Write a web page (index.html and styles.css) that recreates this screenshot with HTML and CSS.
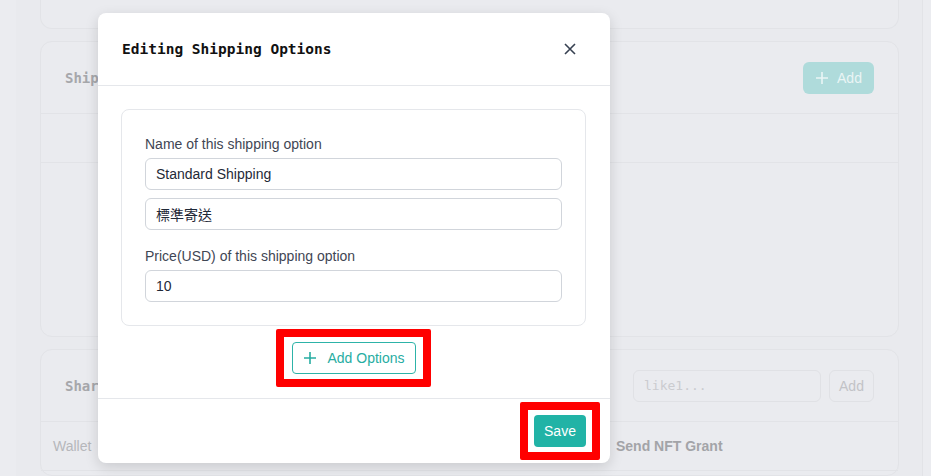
FILE: index.html
```html
<!DOCTYPE html>
<html>
<head>
<meta charset="utf-8">
<link rel="stylesheet" href="styles.css">
</head>
<body>
<div class="page">
  <div class="container">
    <div class="card card-top"></div>
    <div class="card card-ship">
      <div class="card-head">
        <span class="card-title">Shipping Options</span>
        <button class="btn-add-bg"><svg width="14" height="14" viewBox="0 0 14 14"><path d="M7 1v12M1 7h12" stroke="currentColor" stroke-width="1.6" fill="none"/></svg><span>Add</span></button>
      </div>
      <div class="card-row"></div>
    </div>
    <div class="card card-share">
      <div class="card-head">
        <span class="card-title">Share NFT Grant</span>
        <div class="head-right">
          <div class="fake-input">like1...</div>
          <button class="btn-ghost">Add</button>
        </div>
      </div>
      <div class="table-row">
        <span class="col-wallet">Wallet</span>
        <span class="col-send">Send NFT Grant</span>
      </div>
    </div>
  </div>
</div>

<div class="modal">
  <div class="modal-head">
    <h2 class="modal-title">Editing Shipping Options</h2>
    <button class="close"><svg width="12" height="12" viewBox="0 0 12 12"><path d="M1 1l10 10M11 1L1 11" stroke="#374151" stroke-width="1.6" fill="none"/></svg></button>
  </div>
  <div class="modal-body">
    <div class="option-card">
      <label class="label">Name of this shipping option</label>
      <div class="input">Standard Shipping</div>
      <div class="input input-gap">標準寄送</div>
      <label class="label label-gap">Price(USD) of this shipping option</label>
      <div class="input">10</div>
    </div>
    <div class="add-wrap">
      <button class="btn-outline mark mark-add"><svg width="14" height="14" viewBox="0 0 14 14"><path d="M7 1v12M1 7h12" stroke="currentColor" stroke-width="1.6" fill="none"/></svg><span>Add Options</span></button>
    </div>
  </div>
  <div class="modal-foot">
    <button class="btn-save mark mark-save">Save</button>
  </div>
</div>
</body>
</html>
```

FILE: styles.css
```css
* { box-sizing: border-box; }
html, body { margin: 0; padding: 0; }
body {
  background: #ebecf0;
  font-family: "Liberation Sans", Arial, sans-serif;
  width: 931px;
  height: 476px;
  overflow: hidden;
}
button { font-family: inherit; cursor: pointer; }

.page { padding: 0 8px 0 16px; }
.container {
  background: #e9eaee;
  border-right: 1px solid #e2e3e7;
  padding: 0 23px 0 24px;
  display: flex;
  flex-direction: column;
  gap: 12px;
  height: 476px;
}
.card {
  background: #eaebef;
  border: 1px solid #e2e3e7;
  border-radius: 12px;
}
.card-top {
  height: 29px;
  border-top: none;
  border-radius: 0 0 12px 12px;
}
.card-ship { height: 296px; }
.card-head {
  height: 72px;
  display: flex;
  align-items: center;
  justify-content: space-between;
  padding: 0 24px;
  border-bottom: 1px solid #e2e3e7;
}
.card-title {
  font-family: "DejaVu Sans Mono", monospace;
  font-weight: bold;
  font-size: 14px;
  color: #a6a7ab;
}
.btn-add-bg {
  height: 32px;
  width: 71px;
  border: none;
  border-radius: 6px;
  background: #afdbdb;
  color: #eaf5f5;
  font-size: 14px;
  display: flex;
  align-items: center;
  justify-content: center;
  gap: 8px;
  padding: 0;
}
.card-row { height: 49px; border-bottom: 1px solid #e2e3e7; }
.card-share { flex: 1; }
.head-right { display: flex; gap: 8px; }
.fake-input {
  width: 188px;
  height: 32px;
  border: 1px solid #e0e1e5;
  border-radius: 6px;
  font-family: "DejaVu Sans Mono", monospace;
  font-size: 13px;
  color: #cbccd0;
  display: flex;
  align-items: center;
  padding-left: 10px;
}
.btn-ghost {
  width: 45px;
  height: 32px;
  border: 1px solid #e0e1e5;
  border-radius: 6px;
  background: transparent;
  color: #c2c3c7;
  font-size: 14px;
  padding: 0;
}
.table-row {
  height: 49px;
  display: flex;
  align-items: center;
  padding-left: 12px;
  border-bottom: 1px solid #e2e3e7;
  font-size: 14px;
}
.col-wallet { color: #b6b7bb; width: 563px; }
.col-send { color: #a3a4a8; font-weight: bold; }

.modal {
  position: absolute;
  left: 98px;
  top: 13px;
  width: 512px;
  height: 450px;
  background: #fff;
  border-radius: 8px;
  box-shadow: 0 4px 14px rgba(0, 0, 0, 0.14);
  display: flex;
  flex-direction: column;
}
.modal-head {
  height: 73px;
  border-bottom: 1px solid #e5e7eb;
  display: flex;
  align-items: center;
  justify-content: space-between;
  padding: 0 34px 0 24px;
}
.modal-title {
  margin: 0;
  font-family: "DejaVu Sans Mono", monospace;
  font-weight: bold;
  font-size: 14.5px;
  color: #111;
}
.close {
  border: none;
  background: none;
  padding: 0;
  width: 12px;
  height: 12px;
  display: flex;
}
.modal-body {
  padding: 23px 24px 24px 23px;
  border-bottom: 1px solid #e5e7eb;
}
.option-card {
  border: 1px solid #e5e7eb;
  border-radius: 8px;
  padding: 24px 23px 23px 23px;
  display: flex;
  flex-direction: column;
}
.label {
  font-size: 14px;
  line-height: 20px;
  color: #3f4654;
  margin-bottom: 4px;
}
.label-gap { margin-top: 16px; }
.input {
  height: 32px;
  border: 1px solid #d1d5db;
  border-radius: 6px;
  display: flex;
  align-items: center;
  padding-left: 10px;
  font-family: "Liberation Sans", "Noto Sans CJK TC", sans-serif;
  font-size: 14px;
  color: #1f2937;
}
.input-gap { margin-top: 8px; }
.add-wrap {
  display: flex;
  justify-content: center;
  margin-top: 16px;
}
.btn-outline {
  height: 32px;
  width: 124px;
  border: 1px solid #2db3a8;
  border-radius: 4px;
  background: #fff;
  color: #27ada2;
  font-size: 14px;
  display: flex;
  align-items: center;
  justify-content: center;
  gap: 10px;
  padding: 0 0 0 1px;
}
.modal-foot {
  flex: 1;
  display: flex;
  align-items: center;
  justify-content: flex-end;
  padding: 0 24px;
}
.btn-save {
  width: 52px;
  height: 32px;
  border: none;
  border-radius: 4px;
  background: #21b3a6;
  color: #fff;
  font-size: 14px;
  padding: 0;
}
.mark { position: relative; }
.mark::after {
  content: "";
  position: absolute;
  border: 8px solid #ff0000;
  border-radius: 2px;
  pointer-events: none;
}
.mark-add::after { top: -14px; bottom: -14px; left: -17px; right: -16px; }
.mark-save::after { top: -13px; bottom: -13px; left: -14px; right: -14px; }
```
